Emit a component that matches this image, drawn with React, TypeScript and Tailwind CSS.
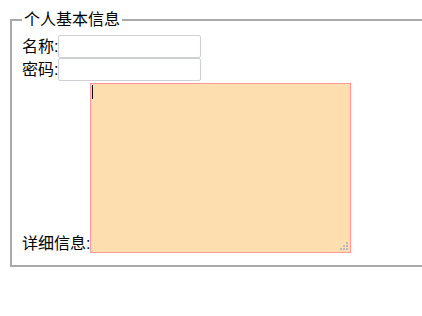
import React from 'react';

const App = () => {
  return (
    <div className="w-full overflow-hidden bg-white pt-[10px] pl-[10px] font-['Liberation_Sans','Noto_Sans_CJK_SC',sans-serif] text-base text-black">
      <fieldset className="w-[440px] border-2 border-[#a9a9a9] pl-[10px] pt-[5px] pb-[9px]">
        <legend className="px-[2px] leading-[20px]">个人基本信息</legend>

        {/* name */}
        <div className="flex items-center h-[23px]">
          <label className="leading-[20px]">名称:</label>
          <input
            type="text"
            className="h-[23px] w-[143px] rounded-[2px] border border-[#cfd1d8] bg-white px-[2px] outline-none"
          />
        </div>

        {/* password */}
        <div className="flex items-center h-[23px]">
          <label className="leading-[20px]">密码:</label>
          <input
            type="password"
            className="h-[23px] w-[143px] rounded-[2px] border border-[#cfd1d8] bg-white px-[2px] outline-none"
          />
        </div>

        {/* details */}
        <div className="flex items-end mt-[2px] pb-[3px]">
          <label className="leading-[20px] mb-[-1px]">详细信息:</label>
          <div className="relative">
            <textarea className="block h-[170px] w-[261px] resize-none border border-[#ff9999] bg-[#fddeae] outline-none" />
            <span className="absolute left-[2px] top-[2px] h-[14px] w-px bg-black" />
            <svg className="absolute right-[3px] bottom-[3px]" width="8" height="8" viewBox="0 0 8 8">
              <rect x="6" y="0" width="2" height="2" fill="#b8b8c0" />
              <rect x="3" y="3" width="2" height="2" fill="#b8b8c0" />
              <rect x="6" y="3" width="2" height="2" fill="#b8b8c0" />
              <rect x="0" y="6" width="2" height="2" fill="#b8b8c0" />
              <rect x="3" y="6" width="2" height="2" fill="#b8b8c0" />
              <rect x="6" y="6" width="2" height="2" fill="#b8b8c0" />
            </svg>
          </div>
        </div>
      </fieldset>
    </div>
  );
};

export default App;
